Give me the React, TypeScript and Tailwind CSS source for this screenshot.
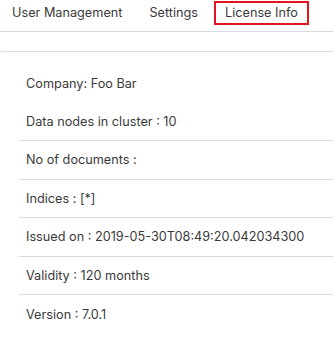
const tabs = [
  { name: "User Management", cls: "mr-[27px]", active: false },
  { name: "Settings", cls: "mr-[16px]", active: false },
  { name: "License Info", cls: "", active: true },
]

const rows = [
  { text: "Company: Foo Bar", line: false },
  { text: "Data nodes in cluster : 10", line: true },
  { text: "No of documents :", line: true },
  { text: "Indices : [*]", line: true },
  { text: "Issued on : 2019-05-30T08:49:20.042034300", line: true },
  { text: "Validity : 120 months", line: true },
  { text: "Version : 7.0.1", line: false },
]

export default function App() {
  return (
    <div className="h-[339px] w-[333px] overflow-hidden bg-white font-['Inter',sans-serif] text-[12.7px] text-[#3a3a3a]">
      {/* tab bar */}
      <div className="flex h-[32px] items-start border-b border-[#d9dae3] pl-[12px] pt-px">
        {tabs.map((t) => (
          <div
            key={t.name}
            className={
              t.active
                ? "flex h-[24px] shrink-0 items-center whitespace-nowrap border-2 border-[#e3131f] px-[9px]"
                : `${t.cls} flex h-[24px] shrink-0 items-center whitespace-nowrap`
            }
          >
            {t.name}
          </div>
        ))}
      </div>

      {/* license panel */}
      <div className="mt-[19px] ml-px border-t border-[#d9dae3] pt-[12px] pl-[18px]">
        {rows.map((r) => (
          <div
            key={r.text}
            className={
              r.line
                ? "flex h-[38.5px] items-center whitespace-nowrap border-b border-[#d9dae3] pl-[7px]"
                : "flex h-[38.5px] items-center whitespace-nowrap pl-[7px]"
            }
          >
            {r.text}
          </div>
        ))}
      </div>
    </div>
  )
}
